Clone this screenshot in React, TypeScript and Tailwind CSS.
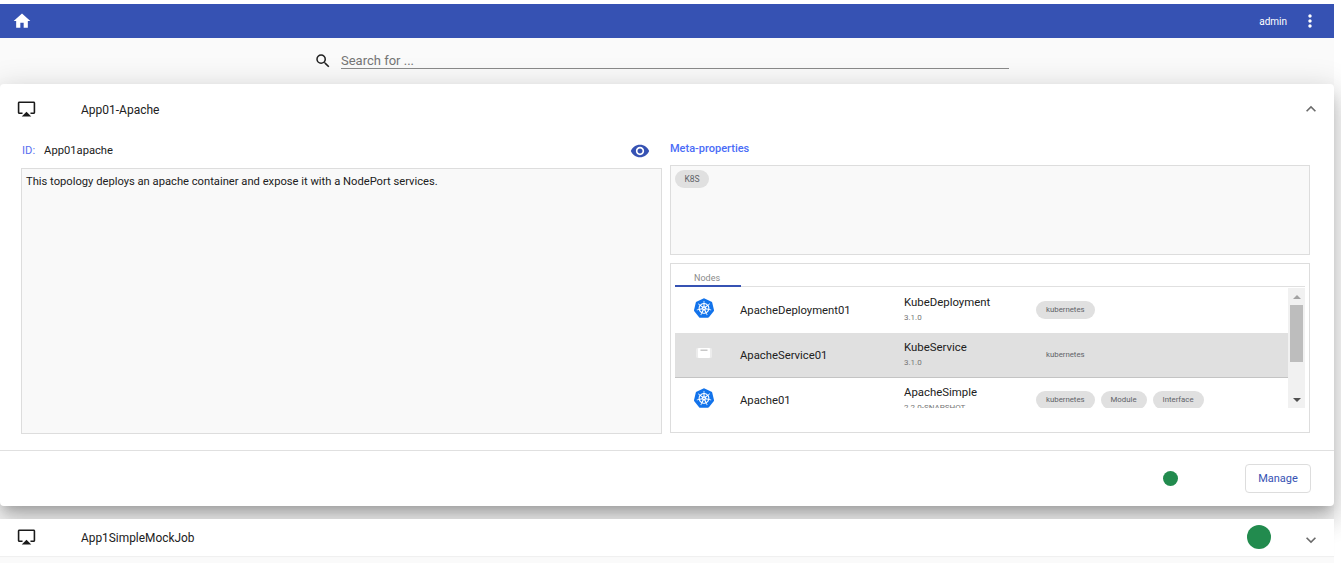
import React from "react";
import { MdHome, MdMoreVert, MdSearch, MdAirplay, MdVisibility, MdExpandLess, MdExpandMore } from "react-icons/md";
import { SiKubernetes } from "react-icons/si";

function Chip({ label, plain }: { label: string; plain?: boolean }) {
  return (
    <span className={`h-[18px] px-[10px] rounded-full flex items-center text-[7.8px] text-[#5f6368] ${plain ? "" : "bg-[#e0e0e0]"}`}>
      {label}
    </span>
  );
}

function ServiceIcon() {
  return (
    <svg width="20" height="20" viewBox="0 0 20 20">
      <rect x="2" y="5" width="16" height="10" rx="1.5" fill="#ececec" />
      <rect x="4" y="5" width="12" height="10" rx="1" fill="#ffffff" />
      <rect x="6.5" y="6.5" width="7" height="1.5" fill="#c8c8c8" />
    </svg>
  );
}

function NodeRow({ icon, name, type, version, chips, selected, plainChip }: {
  icon: React.ReactNode; name: string; type: string; version: string; chips: string[]; selected?: boolean; plainChip?: boolean;
}) {
  return (
    <div className={`flex h-[45px] shrink-0 ${selected ? "bg-[#e0e0e0] border-b border-[#c4c4c4]" : "bg-white"}`}>
      <div className="w-[65px] pl-[19px] pt-[10px] shrink-0">{icon}</div>
      <div className="w-[164px] pt-[16px] text-[11.3px] leading-[14px] text-[#212121] shrink-0">{name}</div>
      <div className="w-[132px] pt-[7px] shrink-0">
        <div className="text-[11.4px] leading-[14px] text-[#212121]">{type}</div>
        <div className="text-[8px] leading-[10px] text-[#757575] mt-[4px]">{version}</div>
      </div>
      <div className="flex gap-[6px] pt-[13px] items-start">
        {chips.map((c) => <Chip key={c} label={c} plain={plainChip} />)}
      </div>
    </div>
  );
}

export default function App() {
  const k8s = <SiKubernetes size={20} color="#1273eb" />;
  return (
    <div className="w-[1341px] h-[563px] overflow-hidden bg-white font-['Roboto',sans-serif]">
      <div className="w-[1334px] h-[563px] bg-[#fafafa] mt-1 flex flex-col">
        <div className="h-[34px] shrink-0 bg-[#3652b3] flex items-center justify-between pl-[12px] pr-[14px]">
          <MdHome size={20} color="#fff" />
          <div className="flex items-center gap-[13px]">
            <span className="text-[10px] text-white">admin</span>
            <MdMoreVert size={20} color="#fff" />
          </div>
        </div>
        <div className="h-[46px] shrink-0 flex items-start pl-[314px] pt-[13px]">
          <MdSearch size={18} color="#212121" className="mt-[1px]" />
          <div className="ml-[9px] w-[668px] h-[18px] border-b border-[#8a8a8a] text-[13px] leading-[19px] text-[#757575]">Search for ...</div>
        </div>
        <div className="relative h-[422px] shrink-0 bg-white rounded-[4px] shadow-[0_8px_10px_-5px_rgba(0,0,0,0.2),0_16px_24px_2px_rgba(0,0,0,0.14),0_6px_30px_5px_rgba(0,0,0,0.12)] flex flex-col">
          <div className="h-[52px] shrink-0 flex pl-[17px] pr-[13px] pt-[15px] justify-between">
            <div className="flex">
              <MdAirplay size={19} color="#1a1a1a" />
              <span className="ml-[45px] text-[12px] leading-[22px] text-[#212121]">App01-Apache</span>
            </div>
            <MdExpandLess size={20} color="#6b6b6b" />
          </div>
          <div className="h-[315px] shrink-0 flex pl-[21px] gap-[8px] border-b border-[#e0e0e0]">
            <div className="w-[641px] shrink-0 flex flex-col">
              <div className="h-[32px] flex items-start justify-between pr-[12px] pt-[7px]">
                <div className="text-[11.2px] leading-[14px] pt-[1px] pl-[1px]">
                  <span className="text-[#5a6ff0]">ID:</span>
                  <span className="ml-[9px] text-[#212121]">App01apache</span>
                </div>
                <MdVisibility size={20} color="#3652b3" className="-mt-[2px]" />
              </div>
              <div className="h-[266px] border border-[#dddddd] bg-[#f9f9f9] px-[4px] py-[6px] text-[11.2px] leading-[14px] text-[#212121]">
                This topology deploys an apache container and expose it with a NodePort services.
              </div>
            </div>
            <div className="w-[640px] shrink-0 flex flex-col">
              <div className="h-[29px] pt-[6px] text-[11px] leading-[14px] text-[#4a6cf7] font-medium">Meta-properties</div>
              <div className="h-[90px] border border-[#dddddd] bg-[#f9f9f9] pl-[4px] pt-[4px] flex items-start">
                <span className="h-[18px] px-[9.5px] rounded-full bg-[#e0e0e0] flex items-center text-[8.5px] text-[#5f6368]">K8S</span>
              </div>
              <div className="h-[170px] mt-[8px] border border-[#dddddd] bg-white px-[4px] flex flex-col">
                <div className="h-[23px] shrink-0 border-b border-[#e0e0e0]">
                  <div className="w-[66px] h-[23px] border-b-2 border-[#3652b3] text-[9px] leading-[9px] pt-[10px] pl-[19px] text-[#8a8a8a]">Nodes</div>
                </div>
                <div className="h-[120px] shrink-0 flex mt-[1px]">
                  <div className="w-[613px] h-[120px] overflow-hidden flex flex-col shrink-0">
                    <NodeRow icon={k8s} name="ApacheDeployment01" type="KubeDeployment" version="3.1.0" chips={["kubernetes"]} />
                    <NodeRow icon={<ServiceIcon />} name="ApacheService01" type="KubeService" version="3.1.0" chips={["kubernetes"]} selected plainChip />
                    <NodeRow icon={k8s} name="Apache01" type="ApacheSimple" version="2.2.0-SNAPSHOT" chips={["kubernetes", "Module", "Interface"]} />
                  </div>
                  <div className="w-[17px] h-[120px] bg-[#f1f1f1] flex flex-col items-center shrink-0">
                    <div className="h-[17px] shrink-0 flex items-center justify-center">
                      <div className="w-0 h-0 border-x-[4px] border-x-transparent border-b-[4px] border-b-[#a3a3a3]" />
                    </div>
                    <div className="w-[13px] h-[57px] bg-[#bdbdbd] shrink-0" />
                    <div className="flex-1" />
                    <div className="h-[17px] shrink-0 flex items-center justify-center">
                      <div className="w-0 h-0 border-x-[4px] border-x-transparent border-t-[4px] border-t-[#505050]" />
                    </div>
                  </div>
                </div>
              </div>
            </div>
          </div>
          <div className="flex-1 flex items-start justify-end pr-[23px] pt-[13px]">
            <div className="w-[15px] h-[15px] rounded-full bg-[#228b4e] mt-[7px] mr-[67px]" />
            <button className="w-[66px] h-[29px] pt-[1px] border border-[#dddddd] rounded-[4px] bg-white text-[#3652b3] text-[11px]">Manage</button>
          </div>
        </div>
        <div className="relative mt-[13px] h-[37px] shrink-0 bg-white shadow-[0_1px_1px_rgba(0,0,0,0.04)] flex items-start justify-between pl-[17px] pr-[13px]">
          <div className="flex items-center h-[37px]">
            <MdAirplay size={19} color="#1a1a1a" className="-mt-[2px]" />
            <span className="ml-[45px] text-[11.9px] pt-[2px] text-[#212121]">App1SimpleMockJob</span>
          </div>
          <div className="flex items-start gap-[30px] pt-[6px]">
            <div className="w-[24px] h-[24px] rounded-full bg-[#228b4e]" />
            <MdExpandMore size={20} color="#6b6b6b" className="mt-[5px]" />
          </div>
        </div>
      </div>
    </div>
  );
}
